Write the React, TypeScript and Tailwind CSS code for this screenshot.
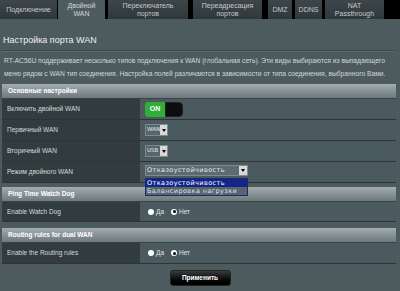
import React from "react";

const tabs: { label: string[]; w: number; mr: number; active?: boolean }[] = [
  { label: ["Подключение"], w: 57, mr: 1 },
  { label: ["Двойной", "WAN"], w: 47, mr: 3, active: true },
  { label: ["Переключатель", "портов"], w: 80, mr: 5 },
  { label: ["Переадресация", "портов"], w: 69, mr: 6 },
  { label: ["DMZ"], w: 24, mr: 3 },
  { label: ["DDNS"], w: 27, mr: 3 },
  { label: ["NAT", "Passthrough"], w: 59, mr: 0 },
];

function Header({ children, h }: { children: React.ReactNode; h: string }) {
  return (
    <div
      className={`${h} flex items-center pl-[6px] text-[6.5px] font-bold text-white bg-gradient-to-b from-[#a3adb1] to-[#6e797d] border-b border-[#3a4447]`}
    >
      {children}
    </div>
  );
}

function Row({ label, children, h = "h-[21px]" }: { label: string; children?: React.ReactNode; h?: string }) {
  return (
    <div className={`${h} flex border-b border-[#2c3437]`}>
      <div className="w-[138px] bg-[#323c3f] flex items-center pl-[5px] text-[6.5px] text-[#d6dadb]">{label}</div>
      <div className="flex-1 bg-[#4a5a5f] flex items-center pl-[5px] relative">{children}</div>
    </div>
  );
}

function SmallSelect({ value }: { value: string }) {
  return (
    <div className="w-[23px] h-[12px] flex items-center border border-[#7d8a8f] bg-[#56666c]">
      <span className="flex-1 pl-[1px] font-['DejaVu_Sans'] text-[5.5px] text-[#e4e8e9] leading-none">{value}</span>
      <span className="w-[7px] h-[10px] bg-[#d8d8d8] flex items-center justify-center">
        <span className="block w-0 h-0 border-l-[2px] border-r-[2px] border-t-[3px] border-l-transparent border-r-transparent border-t-black" />
      </span>
    </div>
  );
}

function Radio({ checked, label }: { checked?: boolean; label: string }) {
  return (
    <span className="flex items-center mr-[7px]">
      <span className="w-[6px] h-[6px] rounded-full bg-white flex items-center justify-center">
        {checked && <span className="w-[3px] h-[3px] rounded-full bg-black" />}
      </span>
      <span className="ml-[2px] text-[6.5px] text-[#e0e4e5]">{label}</span>
    </span>
  );
}

export default function App() {
  return (
    <div className="w-[400px] h-[291px] bg-black overflow-hidden font-['Liberation_Sans',Arial,sans-serif]">
      <div className="h-[19px] flex">
        {tabs.map((t, i) => (
          <div
            key={i}
            style={{ width: t.w, marginRight: t.mr }}
            className={`h-full flex flex-col items-center justify-center text-[7px] leading-[8px] text-center ${
              t.active ? "bg-[#4e5b5f] text-[#d4d9db]" : "bg-gradient-to-b from-[#3d4649] to-[#30383b] text-[#c3c9cb]"
            }`}
          >
            {t.label.map((l, j) => (
              <span key={j}>{l}</span>
            ))}
          </div>
        ))}
      </div>
      <div className="h-[272px] bg-[#4d5a5e] pl-[2px] pr-[4px] pt-[15px]">
        <div className="h-[12px] leading-[12px] pl-[1px] text-[9px] text-[#eef1f2]">Настройка порта WAN</div>
        <div className="mt-[4px] border-t border-[#3d484c] border-b border-b-[#5b686c]" />
        <div className="mt-[3px] pl-[2px] text-[6.7px] leading-[12.5px] text-[#d3d8da] whitespace-nowrap">
          <div>RT-AC56U поддерживает несколько типов подключения к WAN (глобальная сеть). Эти виды выбираются из выпадающего</div>
          <div>меню рядом с WAN тип соединения. Настройка полей различаются в зависимости от типа соединения, выбранного Вами.</div>
        </div>
        <div className="mt-[4px]">
          <Header h="h-[15px]">Основные настройки</Header>
          <Row label="Включить двойной WAN">
            <div className="flex h-[15px]">
              <div className="w-[20px] h-full bg-[#2fae3a] rounded-l-[3px] flex items-center justify-center text-[7px] font-bold text-white">
                ON
              </div>
              <div className="w-[18px] h-full bg-[#0b0d0e] rounded-r-[4px] border border-[#222]" />
            </div>
          </Row>
          <Row label="Первичный WAN">
            <SmallSelect value="WAN" />
          </Row>
          <Row label="Вторичный WAN">
            <SmallSelect value="USB" />
          </Row>
          <Row label="Режим двойного WAN">
            <div className="w-[103px] h-[11px] -mt-[3px] flex items-center border border-[#7d8a8f] bg-[#5a6b71]">
              <span className="flex-1 pl-[1px] font-['DejaVu_Sans'] text-[6.5px] tracking-[0.4px] text-[#e6eaeb] leading-none whitespace-nowrap">
                Отказоустойчивость
              </span>
              <span className="w-[8px] h-[9px] bg-[#d8d8d8] flex items-center justify-center">
                <span className="block w-0 h-0 border-l-[2px] border-r-[2px] border-t-[3px] border-l-transparent border-r-transparent border-t-black" />
              </span>
            </div>
            <div className="absolute left-[5px] top-[16px] w-[103px] z-10 border border-[#1d2a6e] bg-[#56666c] font-['DejaVu_Sans'] text-[6.5px] tracking-[0.4px] leading-[8px] whitespace-nowrap overflow-hidden">
              <div className="bg-[#14258a] text-white pl-[1px]">Отказоустойчивость</div>
              <div className="text-[#dfe3e4] pl-[1px]">Балансировка нагрузки</div>
            </div>
          </Row>
        </div>
        <div className="mt-[4px]">
          <Header h="h-[15px]">Ping Time Watch Dog</Header>
          <Row label="Enable Watch Dog" h="h-[20px]">
            <div className="flex items-center pl-[3px]">
              <Radio label="Да" />
              <Radio checked label="Нет" />
            </div>
          </Row>
        </div>
        <div className="mt-[6px]">
          <Header h="h-[15px]">Routing rules for dual WAN</Header>
          <Row label="Enable the Routing rules">
            <div className="flex items-center pl-[3px]">
              <Radio label="Да" />
              <Radio checked label="Нет" />
            </div>
          </Row>
        </div>
        <div className="mt-[6px] flex justify-center pl-[2px]">
          <div className="w-[61px] h-[16px] rounded-[3px] bg-gradient-to-b from-[#3a3d3f] via-[#111] to-black border border-[#222] flex items-center justify-center text-[6.5px] font-bold text-white">
            Применить
          </div>
        </div>
      </div>
    </div>
  );
}
